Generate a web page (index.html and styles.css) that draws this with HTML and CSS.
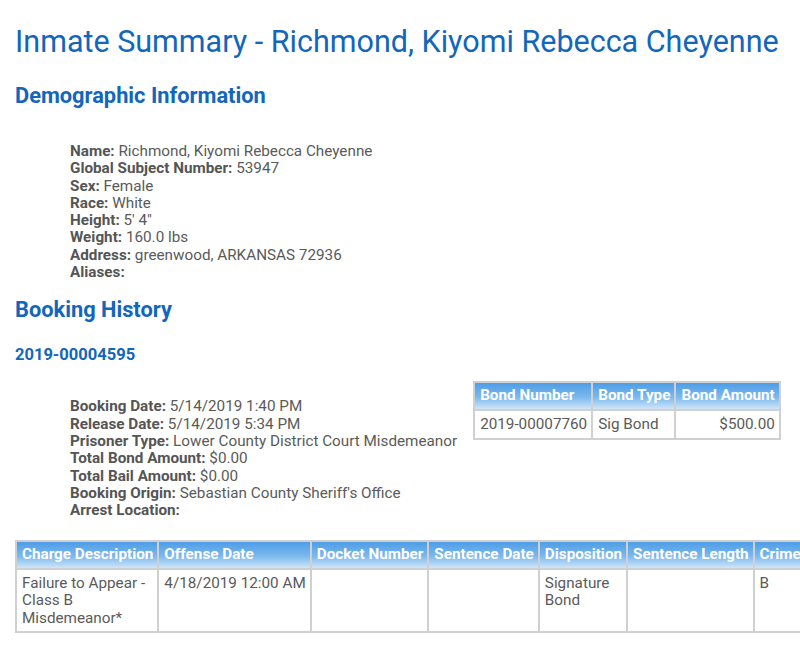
FILE: index.html
```html
<html>

<head>
	<title>Inmate Summary</title>
	<link rel="stylesheet" href="styles.css">
</head>

<body>
	<h1>Inmate Summary - Richmond, Kiyomi Rebecca Cheyenne</h1>

	<h2>Demographic Information</h2>
	<div class="details">
		<div><b>Name:</b> Richmond, Kiyomi Rebecca Cheyenne</div>
		<div><b>Global Subject Number:</b> 53947</div>
		<div><b>Sex:</b> Female</div>
		<div><b>Race:</b> White</div>
		<div><b>Height:</b> 5' 4"</div>
		<div><b>Weight:</b> 160.0 lbs</div>
		<div><b>Address:</b> greenwood, ARKANSAS 72936</div>
		<div><b>Aliases:</b></div>
	</div>

	<h2 class="history">Booking History</h2>
	<h3>2019-00004595</h3>
	<div class="booking">
		<div class="details">
			<div><b>Booking Date:</b> 5/14/2019 1:40 PM</div>
			<div><b>Release Date:</b> 5/14/2019 5:34 PM</div>
			<div><b>Prisoner Type:</b> Lower County District Court Misdemeanor</div>
			<div><b>Total Bond Amount:</b> $0.00</div>
			<div><b>Total Bail Amount:</b> $0.00</div>
			<div><b>Booking Origin:</b> Sebastian County Sheriff's Office</div>
			<div><b>Arrest Location:</b></div>
		</div>
		<table class="grid bonds">
			<tr>
				<th>Bond Number</th>
				<th>Bond Type</th>
				<th>Bond Amount</th>
			</tr>
			<tr>
				<td>2019-00007760</td>
				<td>Sig Bond</td>
				<td class="money">$500.00</td>
			</tr>
		</table>
	</div>

	<table class="grid charges">
		<tr>
			<th>Charge Description</th>
			<th>Offense Date</th>
			<th>Docket Number</th>
			<th>Sentence Date</th>
			<th>Disposition</th>
			<th>Sentence Length</th>
			<th>Crime Class</th>
		</tr>
		<tr>
			<td class="desc">Failure to Appear - Class B Misdemeanor*</td>
			<td>4/18/2019 12:00 AM</td>
			<td></td>
			<td></td>
			<td class="disp">Signature Bond</td>
			<td></td>
			<td>B</td>
		</tr>
	</table>
</body>

</html>
```

FILE: styles.css
```css
html {
	font-family: Roboto, "Liberation Sans", sans-serif;
	color: #5a5a5a;
	overflow-x: hidden;
}

body {
	margin: 0;
	padding: 16px 0 0 15px;
	font-size: 15.25px;
}

h1 {
	margin: 8px 0 0;
	font-size: 30.5px;
	font-weight: normal;
	color: #1266bb;
	white-space: nowrap;
}

h2 {
	margin: 24px 0 0;
	font-size: 21.8px;
	color: #1266bb;
}

h2.history {
	margin-top: 16px;
}

h3 {
	margin: 23px 0 0;
	font-size: 16.5px;
	color: #1266bb;
}

b {
	color: #555;
}

.details {
	padding: 35px 0 0 55px;
	line-height: 17.3px;
}

.booking {
	display: flex;
	align-items: flex-start;
	gap: 16px;
	margin-top: 17px;
}

.booking .details {
	padding-top: 17px;
}

.grid {
	border-collapse: collapse;
	font-size: 15.25px;
	line-height: 17.5px;
}

.grid th,
.grid td {
	border: 2px solid #d0d0d0;
	padding: 4px 4px 4px 5px;
	text-align: left;
	vertical-align: top;
	white-space: nowrap;
}

.grid th {
	color: #fff;
	font-weight: bold;
	background: linear-gradient(#4d9de6, #7db9ee 55%, #cfe5f8);
}

.bonds td {
	padding: 5px 4px 5px 5px;
}

.grid .money {
	text-align: right;
}

.charges {
	margin-top: 21px;
}

.charges td {
	height: 53px;
	padding-top: 5px;
}

.charges .desc {
	white-space: normal;
	width: 133px;
}

.charges .disp {
	white-space: normal;
}
```
